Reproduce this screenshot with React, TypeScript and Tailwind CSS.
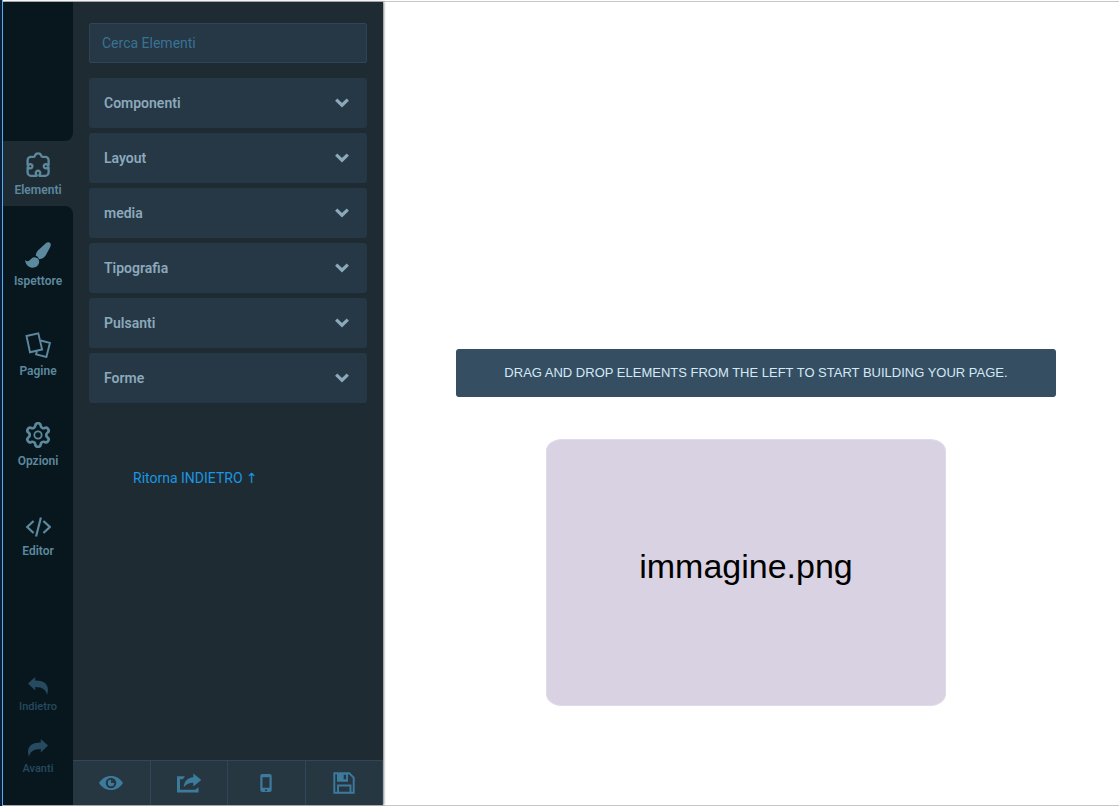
import React from "react";

interface IconProps {
  className?: string;
}

const PuzzleIcon = ({ className }: IconProps) => (
  <svg viewBox="0 0 26 26" className={className} fill="none" stroke="currentColor" strokeWidth="2.3" strokeLinejoin="round" aria-hidden="true">
    <path d="M6 5.800h2.600c.9 0 1.200-.3 1.300-1a3.300 3.300 0 0 1 6.400 0c.1.700.4 1 1.300 1h2.600a3.400 3.400 0 0 1 3.400 3.400v4.900h-1a2.100 2.100 0 1 0 0 2.400h1v4.900a3.400 3.400 0 0 1-3.400 3.400h-5.800v-1a2.300 2.300 0 1 0-2.800 0v1H6a3.400 3.400 0 0 1-3.400-3.400v-4.900h1a2.100 2.100 0 1 0 0-2.400h-1V9.200A3.400 3.400 0 0 1 6 5.800z" />
  </svg>
);

const BrushIcon = ({ className }: IconProps) => (
  <svg viewBox="0 0 26 26" className={className} fill="currentColor" aria-hidden="true">
    <path d="M20.800 1.200c1.700-1.400 4.200-1 4.800.6.400 1.100.1 2.200-.5 3.400l-4.300 8.100c-1.500 2.500-4.400 4.200-7 3.800-.3-1.700-1.300-2.800-3-3.300 0-2 .9-4 2.400-5.500z" />
    <path d="M9.800 15.300c2.400.1 4.400 1.900 4.400 4.300 0 3.500-3 6.200-6.800 6.200-4 0-7-3.500-7.300-7.700 1.500 1.400 3 1.700 4.300.5 1.400-1.400 2.800-3.400 5.400-3.300z" />
  </svg>
);

const PagesIcon = ({ className }: IconProps) => (
  <svg viewBox="0 0 26 26" className={className} fill="none" stroke="currentColor" strokeWidth="1.900" aria-hidden="true">
    <path d="M1.500 4 13.300 1.300l3.800 16.200L5 20.300z" />
    <path d="m15.600 8.500 9.300 2.400L21.400 25l-10.300-2.600.8-3.200" />
  </svg>
);

const GearIcon = ({ className }: IconProps) => (
  <svg viewBox="1 1 22 22" className={className} fill="none" stroke="currentColor" strokeWidth="2.300" strokeLinejoin="round" aria-hidden="true">
    <path d="M9.671 4.136a2.340 2.340 0 0 1 4.659 0 2.340 2.340 0 0 0 3.319 1.915 2.340 2.340 0 0 1 2.330 4.033 2.340 2.340 0 0 0 0 3.831 2.340 2.340 0 0 1-2.330 4.033 2.340 2.340 0 0 0-3.319 1.915 2.340 2.340 0 0 1-4.659 0 2.340 2.340 0 0 0-3.320-1.915 2.340 2.340 0 0 1-2.330-4.033 2.340 2.340 0 0 0 0-3.831A2.340 2.340 0 0 1 6.350 6.051a2.340 2.340 0 0 0 3.319-1.915" />
    <circle cx="12" cy="12" r="3.100" strokeWidth="1.500" />
  </svg>
);

const CodeIcon = ({ className }: IconProps) => (
  <svg viewBox="0 0 26 26" className={className} fill="none" stroke="currentColor" strokeWidth="2.200" aria-hidden="true">
    <path d="M8.600 9 2.200 15l6.400 6M18.400 9l6.400 6-6.400 6M15.900 5.500l-4.800 19" />
  </svg>
);

const UndoIcon = ({ className }: IconProps) => (
  <svg viewBox="0 0 20 18" className={className} fill="currentColor" aria-hidden="true">
    <path d="M0 6.500 7.200 0v3.500C16.500 3.300 22.300 8 19 18c-.7-5.200-4.300-8-11.800-8.100v3.600z" />
  </svg>
);

const RedoIcon = ({ className }: IconProps) => (
  <svg viewBox="0 0 20 18" className={className} fill="currentColor" aria-hidden="true">
    <path d="M20 6.500 12.800 0v3.500C3.500 3.300-2.300 8 1 18c.7-5.200 4.300-8 11.800-8.100v3.600z" />
  </svg>
);

const ChevronIcon = ({ className }: IconProps) => (
  <svg viewBox="0 0 14 10" className={className} fill="none" stroke="currentColor" strokeWidth="3.200" aria-hidden="true">
    <path d="m1.200 1.600 5.800 5.600 5.800-5.600" />
  </svg>
);

const EyeIcon = ({ className }: IconProps) => (
  <svg viewBox="0 0 24 24" className={className} fill="currentColor" aria-hidden="true">
    <path fillRule="evenodd" d="M0 12c3-4.700 7-7 12-7s9 2.300 12 7c-3 4.700-7 7-12 7s-9-2.300-12-7zm12-5.300a5.300 5.300 0 1 0 0 10.600 5.300 5.300 0 0 0 0-10.600z" />
    <path d="M12 8.800v3.200h3.200A3.200 3.200 0 1 1 12 8.800z" />
  </svg>
);

const ShareIcon = ({ className }: IconProps) => (
  <svg viewBox="0 0 24 24" className={className} fill="currentColor" aria-hidden="true">
    <path d="M8 5.200H0v16.300h21.500v-5.200l-3 2.300v.2H3V8.200h2.800z" />
    <path d="M16.300 2.500 24.300 9l-8 6.500v-3.800c-4 0-7 1.300-9.600 4.500.6-6 3.800-9.600 9.600-10z" />
  </svg>
);

const PhoneIcon = ({ className }: IconProps) => (
  <svg viewBox="0 0 24 24" className={className} fill="currentColor" aria-hidden="true">
    <path fillRule="evenodd" d="M8.300 3h7.400a2 2 0 0 1 2 2v14a2 2 0 0 1-2 2H8.300a2 2 0 0 1-2-2V5a2 2 0 0 1 2-2zM8.500 6.200v10.600h7V6.200zm3.500 12a1 1 0 1 0 0 2 1 1 0 0 0 0-2z" />
  </svg>
);

const SaveIcon = ({ className }: IconProps) => (
  <svg viewBox="0 0 24 24" className={className} fill="none" stroke="currentColor" strokeWidth="1.900" aria-hidden="true">
    <path d="M2.300 2.300h15l4.400 4.400v15H2.300z" />
    <path d="M6 21.500v-7h12.500v7" />
    <path fill="currentColor" fillRule="evenodd" stroke="none" d="M5 2.500h11v8.200H5zm6.700 1.300v4.500h2.400V3.800z" />
  </svg>
);

const railItems = [
  { icon: BrushIcon, label: "Ispettore" },
  { icon: PagesIcon, label: "Pagine" },
  { icon: GearIcon, label: "Opzioni" },
  { icon: CodeIcon, label: "Editor" },
];

const historyItems = [
  { icon: UndoIcon, label: "Indietro" },
  { icon: RedoIcon, label: "Avanti" },
];

const groups = ["Componenti", "Layout", "media", "Tipografia", "Pulsanti", "Forme"];

const toolbarItems = [
  { icon: EyeIcon, label: "Anteprima" },
  { icon: ShareIcon, label: "Esporta" },
  { icon: PhoneIcon, label: "Mobile" },
  { icon: SaveIcon, label: "Salva" },
];

function Rail() {
  return (
    <nav className="flex w-[70px] shrink-0 flex-col text-xs leading-4 font-semibold text-[#5d899f]">
      <div className="h-[139px] rounded-br-lg bg-[#08171e]" />
      <button className="flex h-[65px] flex-col items-center gap-[5px] pt-2.5">
        <PuzzleIcon className="size-[26px]" />
        Elementi
      </button>
      <div className="flex flex-1 flex-col justify-between rounded-tr-lg bg-[#08171e] pt-9 pb-7">
        <div className="flex flex-col gap-[43px]">
          {railItems.map((item) => (
            <button key={item.label} className="flex flex-col items-center gap-[5px]">
              <item.icon className="size-[26px]" />
              {item.label}
            </button>
          ))}
        </div>
        <div className="flex flex-col gap-6 text-[11px] font-medium text-[#264a5f]">
          {historyItems.map((item) => (
            <button key={item.label} className="flex flex-col items-center gap-1">
              <item.icon className="h-[18px] w-5" />
              {item.label}
            </button>
          ))}
        </div>
      </div>
    </nav>
  );
}

function ElementsPanel() {
  return (
    <section className="flex w-[310px] shrink-0 flex-col">
      <div className="flex-1 px-4 pt-[21px] text-sm">
        <input
          type="search"
          aria-label="Cerca Elementi"
          placeholder="Cerca Elementi"
          className="block h-10 w-full rounded-xs border border-[#2f4557] bg-[#263745] px-3 text-[#8fadc0] outline-none placeholder:text-[#397394]"
        />
        <div className="mt-[15px] flex flex-col gap-[5px]">
          {groups.map((group) => (
            <button
              key={group}
              className="flex h-[50px] items-center justify-between rounded-[3px] bg-[#263745] pr-[18px] pl-[15px] font-semibold text-[#8ba9bb]"
            >
              {group}
              <ChevronIcon className="h-2.5 w-3.5" />
            </button>
          ))}
        </div>
        <a href="#" className="mt-[65px] ml-11 inline-block text-[#1b96e0]">
          Ritorna INDIETRO <span className="font-['DejaVu_Sans',sans-serif]">↑</span>
        </a>
      </div>
      <div className="grid h-[45px] grid-cols-4 border-t border-[#30465a] bg-[#263742] text-[#3d7b9d]">
        {toolbarItems.map((item) => (
          <button
            key={item.label}
            aria-label={item.label}
            className="flex items-center justify-center border-r border-[#30465a]"
          >
            <item.icon className="size-6" />
          </button>
        ))}
      </div>
    </section>
  );
}

export default function App() {
  return (
    <div className="flex min-h-screen border-l-2 border-[#07203f] bg-white font-[Roboto,sans-serif]">
      <div className="flex flex-1 border-l border-[#5cb3f5] pt-px">
        <div className="flex flex-1 border-y border-[#c4c6c8]">
          <aside className="flex shrink-0 bg-[#1f2b33] shadow-[1px_0_2px_rgba(0,0,0,0.5)]">
            <Rail />
            <ElementsPanel />
          </aside>
          <main className="flex flex-1 justify-center pt-[347px] pl-2.5 font-['Liberation_Sans',sans-serif]">
            <div className="w-full max-w-[600px]">
              <p className="rounded-[3px] bg-[#364e61] px-4 py-3 text-center text-[13px] leading-6 text-[#d3e9f7]">
                DRAG AND DROP ELEMENTS FROM THE LEFT TO START BUILDING YOUR PAGE.
              </p>
              <div className="mx-auto mt-[42px] flex h-[267px] max-w-[420px] pr-5">
                <div className="flex flex-1 items-center justify-center rounded-[16px/12px] border border-[#e0daea] bg-[#d9d2e2] pb-3 text-[34px] text-black">
                  immagine.png
                </div>
              </div>
            </div>
          </main>
        </div>
      </div>
    </div>
  );
}
